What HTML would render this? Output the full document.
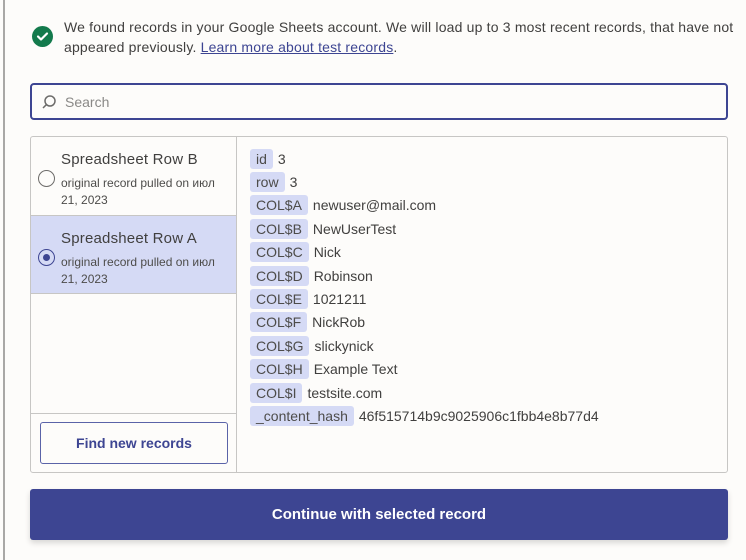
<!DOCTYPE html>
<html><head><meta charset="utf-8"><style>
*{box-sizing:border-box;margin:0;padding:0}
body{width:746px;height:560px;background:#fdfcfa;font-family:"Liberation Sans",sans-serif;color:#403f3e;position:relative;overflow:hidden}
.vl{position:absolute;left:3px;top:0;width:2px;height:560px;background:#a9a8a6}
.chk{position:absolute;left:32px;top:26px;width:21px;height:21px;border-radius:50%;background:#137a4c}
.msg{position:absolute;left:64px;top:17px;font-size:14px;line-height:20px;width:670px;color:#403f3e;letter-spacing:0.18px}
.msg a{color:#3d4592;text-decoration:underline}
.search{position:absolute;left:30px;top:83px;width:698px;height:37px;border:2px solid #3d4592;border-radius:4px;background:#fdfcfa}
.search span{position:absolute;left:33px;top:9px;font-size:14px;color:#8a8987}
.panel{position:absolute;left:30px;top:136px;width:698px;height:337px;border:1px solid #c7c6c4;border-radius:3px}
.left{position:absolute;left:0;top:0;width:206px;height:335px;border-right:1px solid #c7c6c4}
.rec{position:absolute;left:0;width:205px;height:79px;border-bottom:1px solid #c7c6c4}
.rec .t{position:absolute;left:30px;top:14px;font-size:15px;color:#403f3e;letter-spacing:0.2px}
.rec .s{position:absolute;left:30px;top:38px;font-size:12px;line-height:17px;color:#4d4c4a;width:170px}
.radio{position:absolute;left:7px;top:33px;width:17px;height:17px;border-radius:50%;border:1.5px solid #6d6c6a}
.sel{background:#d5daf5}
.sel .radio{border-color:#3d4592}
.sel .radio:after{content:"";position:absolute;left:3.5px;top:3.5px;width:7px;height:7px;border-radius:50%;background:#3d4592}
.div{position:absolute;left:0;top:276px;width:205px;height:1px;background:#c7c6c4}
.find{position:absolute;left:9px;top:285px;width:188px;height:42px;border:1px solid #5a63a8;border-radius:3px;text-align:center;line-height:40px;font-size:14px;font-weight:bold;color:#3d4592}
.right{position:absolute;left:219px;top:10px}
.r{height:23.4px;display:flex;align-items:center;font-size:14px}
.p{background:#d5daf5;border-radius:3px;padding:0 6px;height:20px;line-height:20px;margin-right:5px;color:#4d4c4a}
.btn{position:absolute;left:30px;top:489px;width:698px;height:51px;background:#3d4592;border-radius:3px;color:#fff;font-weight:bold;font-size:15px;text-align:center;line-height:51px;box-shadow:0 3px 6px rgba(0,0,0,.15)}
</style></head><body>
<div class="vl"></div>
<div class="chk"><svg width="21" height="21" viewBox="0 0 21 21"><path d="M6 10.5l3 3 6-6" stroke="#fff" stroke-width="2.2" fill="none" stroke-linecap="round" stroke-linejoin="round"/></svg></div>
<div class="msg">We found records in your Google Sheets account. We will load up to 3 most recent records, that have not appeared previously. <a>Learn more about test records</a>.</div>
<div class="search"><svg style="position:absolute;left:9px;top:9px" width="16" height="16" viewBox="0 0 16 16"><circle cx="9" cy="7" r="5" stroke="#6d6c6a" stroke-width="1.5" fill="none"/><path d="M5.3 10.7L2 14" stroke="#6d6c6a" stroke-width="1.5"/></svg><span>Search</span></div>
<div class="panel">
<div class="left">
<div class="rec" style="top:0"><div class="radio"></div><div class="t">Spreadsheet Row B</div><div class="s">original record pulled on июл 21, 2023</div></div>
<div class="rec sel" style="top:79px;height:78px"><div class="radio"></div><div class="t">Spreadsheet Row A</div><div class="s">original record pulled on июл 21, 2023</div></div>
<div class="div"></div>
<div class="find">Find new records</div>
</div>
<div class="right">
<div class="r"><span class="p">id</span>3</div>
<div class="r"><span class="p">row</span>3</div>
<div class="r"><span class="p">COL$A</span>newuser@mail.com</div>
<div class="r"><span class="p">COL$B</span>NewUserTest</div>
<div class="r"><span class="p">COL$C</span>Nick</div>
<div class="r"><span class="p">COL$D</span>Robinson</div>
<div class="r"><span class="p">COL$E</span>1021211</div>
<div class="r"><span class="p">COL$F</span>NickRob</div>
<div class="r"><span class="p">COL$G</span>slickynick</div>
<div class="r"><span class="p">COL$H</span>Example Text</div>
<div class="r"><span class="p">COL$I</span>testsite.com</div>
<div class="r"><span class="p">_content_hash</span>46f515714b9c9025906c1fbb4e8b77d4</div>
</div>
</div>
<div class="btn">Continue with selected record</div>
</body></html>
